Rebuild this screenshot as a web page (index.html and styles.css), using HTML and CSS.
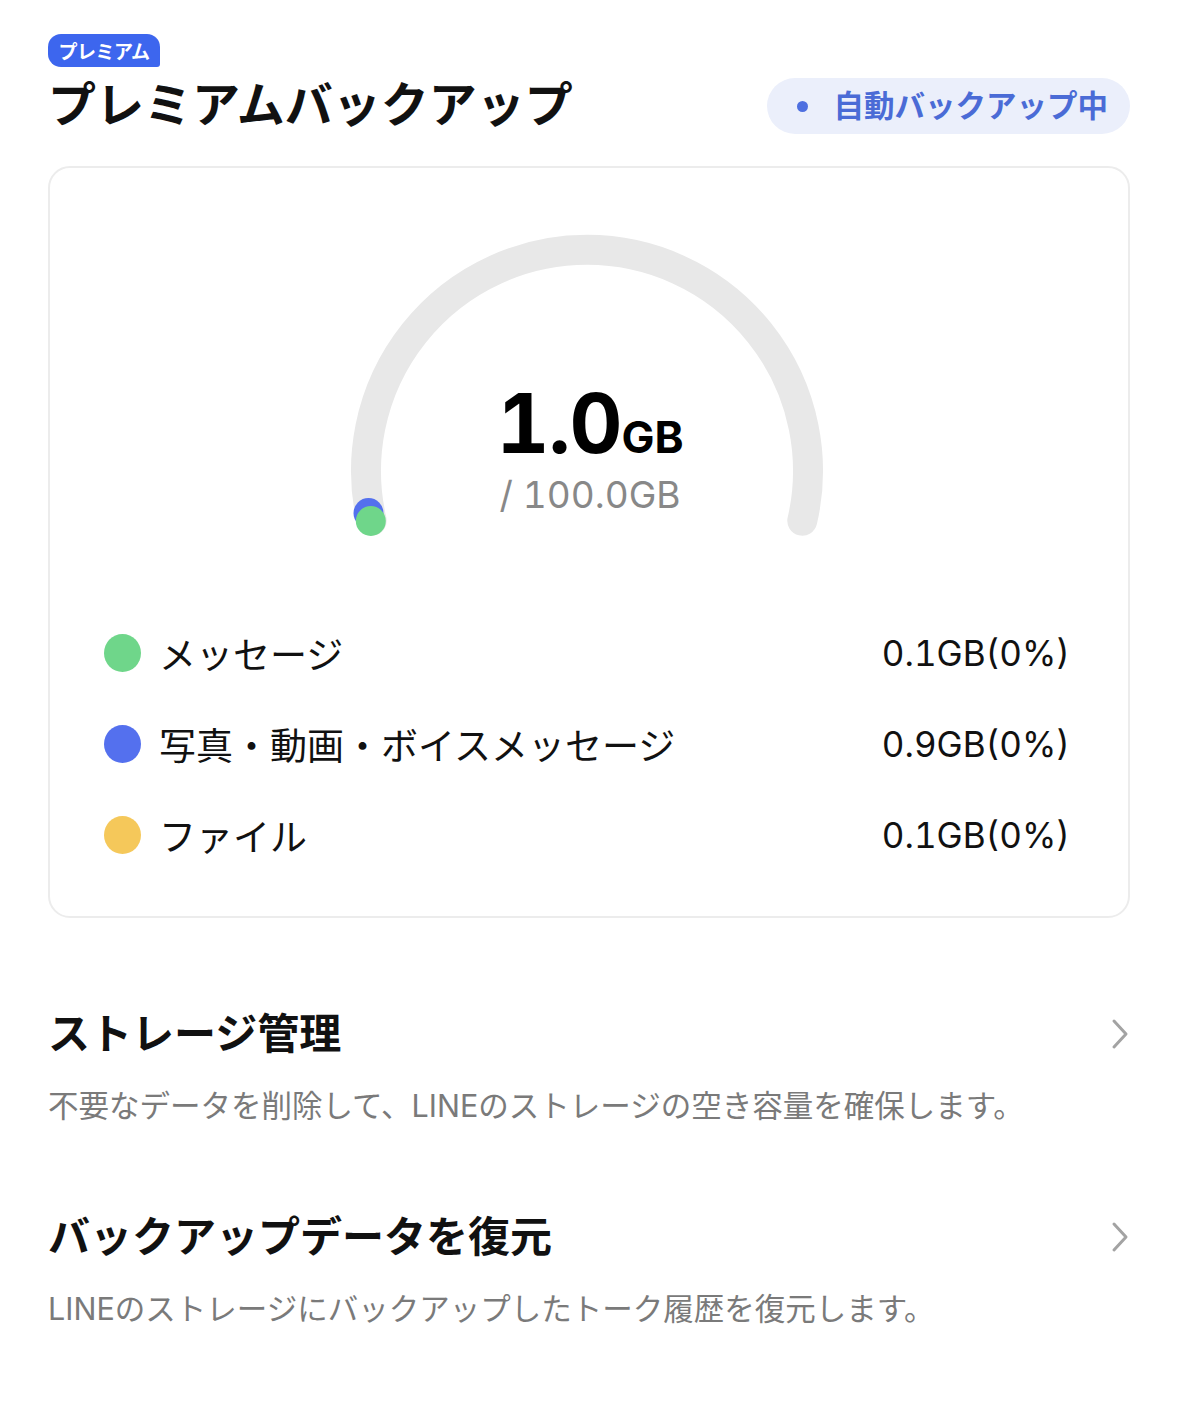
FILE: index.html
```html
<!DOCTYPE html>
<html lang="ja">
<head>
<meta charset="utf-8">
<title>プレミアムバックアップ</title>
<link rel="stylesheet" href="styles.css">
</head>
<body>
<div class="page">
  <div class="badge">プレミアム</div>
  <div class="title-row">
    <h1 class="title">プレミアムバックアップ</h1>
    <div class="pill"><span class="pill-dot"></span><span class="pill-text">自動バックアップ中</span></div>
  </div>

  <div class="card">
    <div class="gauge">
      <svg class="gauge-svg" width="500" height="330" viewBox="0 0 500 330">
        <path class="track" d="M 34.7 295.7 A 221 221 0 1 1 465.3 295.7"/>
        <circle class="dot-blue" cx="31.5" cy="288" r="15"/>
        <circle class="dot-green" cx="33.8" cy="296" r="15"/>
        <text class="used" x="253" y="228" text-anchor="middle"><tspan class="used-num">1.0</tspan><tspan class="used-unit">GB</tspan></text>
        <text class="total" x="253" y="283" text-anchor="middle">/ 100.0GB</text>
      </svg>
    </div>
    <div class="legend">
      <div class="legend-row">
        <span class="legend-dot green"></span>
        <span class="legend-label">メッセージ</span>
        <span class="legend-value">0.1GB(0%)</span>
      </div>
      <div class="legend-row">
        <span class="legend-dot blue"></span>
        <span class="legend-label">写真・動画・ボイスメッセージ</span>
        <span class="legend-value">0.9GB(0%)</span>
      </div>
      <div class="legend-row">
        <span class="legend-dot yellow"></span>
        <span class="legend-label">ファイル</span>
        <span class="legend-value">0.1GB(0%)</span>
      </div>
    </div>
  </div>

  <div class="section first">
    <div class="section-head">
      <h2 class="section-title">ストレージ管理</h2>
      <svg class="chevron" width="20" height="32" viewBox="0 0 20 32"><path d="M4 3 L16 16 L4 29"/></svg>
    </div>
    <p class="section-desc">不要なデータを削除して、LINEのストレージの空き容量を確保します。</p>
  </div>

  <div class="section">
    <div class="section-head">
      <h2 class="section-title">バックアップデータを復元</h2>
      <svg class="chevron" width="20" height="32" viewBox="0 0 20 32"><path d="M4 3 L16 16 L4 29"/></svg>
    </div>
    <p class="section-desc">LINEのストレージにバックアップしたトーク履歴を復元します。</p>
  </div>
</div>
</body>
</html>
```

FILE: styles.css
```css
* { box-sizing: border-box; }
html, body {
  margin: 0;
  padding: 0;
  background: #ffffff;
}
body {
  font-family: "Inter", "Noto Sans CJK JP", sans-serif;
  color: #111111;
}
.page {
  padding: 34px 48px 0 48px;
}
.badge {
  display: inline-flex;
  align-items: center;
  justify-content: center;
  width: 112px;
  height: 33px;
  background: #3d66ee;
  color: #ffffff;
  font-size: 19px;
  font-weight: 700;
  border-radius: 13px 13px 3px 13px;
  letter-spacing: -0.5px;
}
.title-row {
  display: flex;
  align-items: center;
  justify-content: space-between;
  margin-top: 10px;
  height: 56px;
}
.title {
  margin: 0;
  font-size: 48px;
  line-height: 56px;
  font-weight: 700;
  color: #111111;
}
.pill {
  display: flex;
  align-items: center;
  height: 56px;
  margin-top: 2px;
  padding: 0 22px 0 30px;
  background: #ebeffb;
  border-radius: 28px;
}
.pill-dot {
  width: 11px;
  height: 11px;
  border-radius: 50%;
  background: #4e6fe0;
  margin-right: 26px;
}
.pill-text {
  font-size: 30.5px;
  font-weight: 600;
  color: #4a6bd6;
  line-height: 40px;
}
.card {
  margin-top: 33px;
  border: 2px solid #ececec;
  border-radius: 22px;
  padding: 57px 58px 36px 54px;
}
.gauge {
  display: flex;
  justify-content: center;
}
.gauge-svg {
  display: block;
}
.track {
  fill: none;
  stroke: #e8e8e8;
  stroke-width: 30;
  stroke-linecap: round;
}
.dot-blue { fill: #5470ee; }
.dot-green { fill: #6fd68a; }
.used {
  font-family: "Inter", sans-serif;
  font-weight: 700;
  fill: #000000;
  font-feature-settings: "tnum";
}
.used-num { font-size: 82px; letter-spacing: -1px; }
.used-unit { font-size: 44px; }
.total {
  font-family: "Inter", sans-serif;
  font-size: 37px;
  fill: #888888;
  font-feature-settings: "tnum";
}
.legend {
  margin-top: 52px;
}
.legend-row {
  display: flex;
  align-items: center;
  height: 91px;
}
.legend-dot {
  width: 37px;
  height: 38px;
  border-radius: 50%;
  flex: none;
  margin-right: 18px;
}
.legend-dot.green { background: #6fd68a; }
.legend-dot.blue { background: #5470ee; }
.legend-dot.yellow { background: #f5c85a; }
.legend-label {
  font-size: 37px;
  color: #111111;
  flex: 1;
}
.legend-value {
  font-size: 35px;
  color: #111111;
  font-feature-settings: "tnum";
}
.section {
  margin-top: 85px;
}
.section.first {
  margin-top: 90px;
}
.section-head {
  display: flex;
  align-items: center;
  justify-content: space-between;
  height: 52px;
}
.section-title {
  margin: 0;
  font-size: 42px;
  line-height: 52px;
  font-weight: 700;
  color: #111111;
}
.chevron {
  display: block;
}
.chevron path {
  fill: none;
  stroke: #a3a3a3;
  stroke-width: 3;
  stroke-linecap: round;
  stroke-linejoin: round;
}
.section-desc {
  margin: 26px 0 0 0;
  font-size: 30.5px;
  line-height: 40px;
  color: #7a7a7a;
}
```
